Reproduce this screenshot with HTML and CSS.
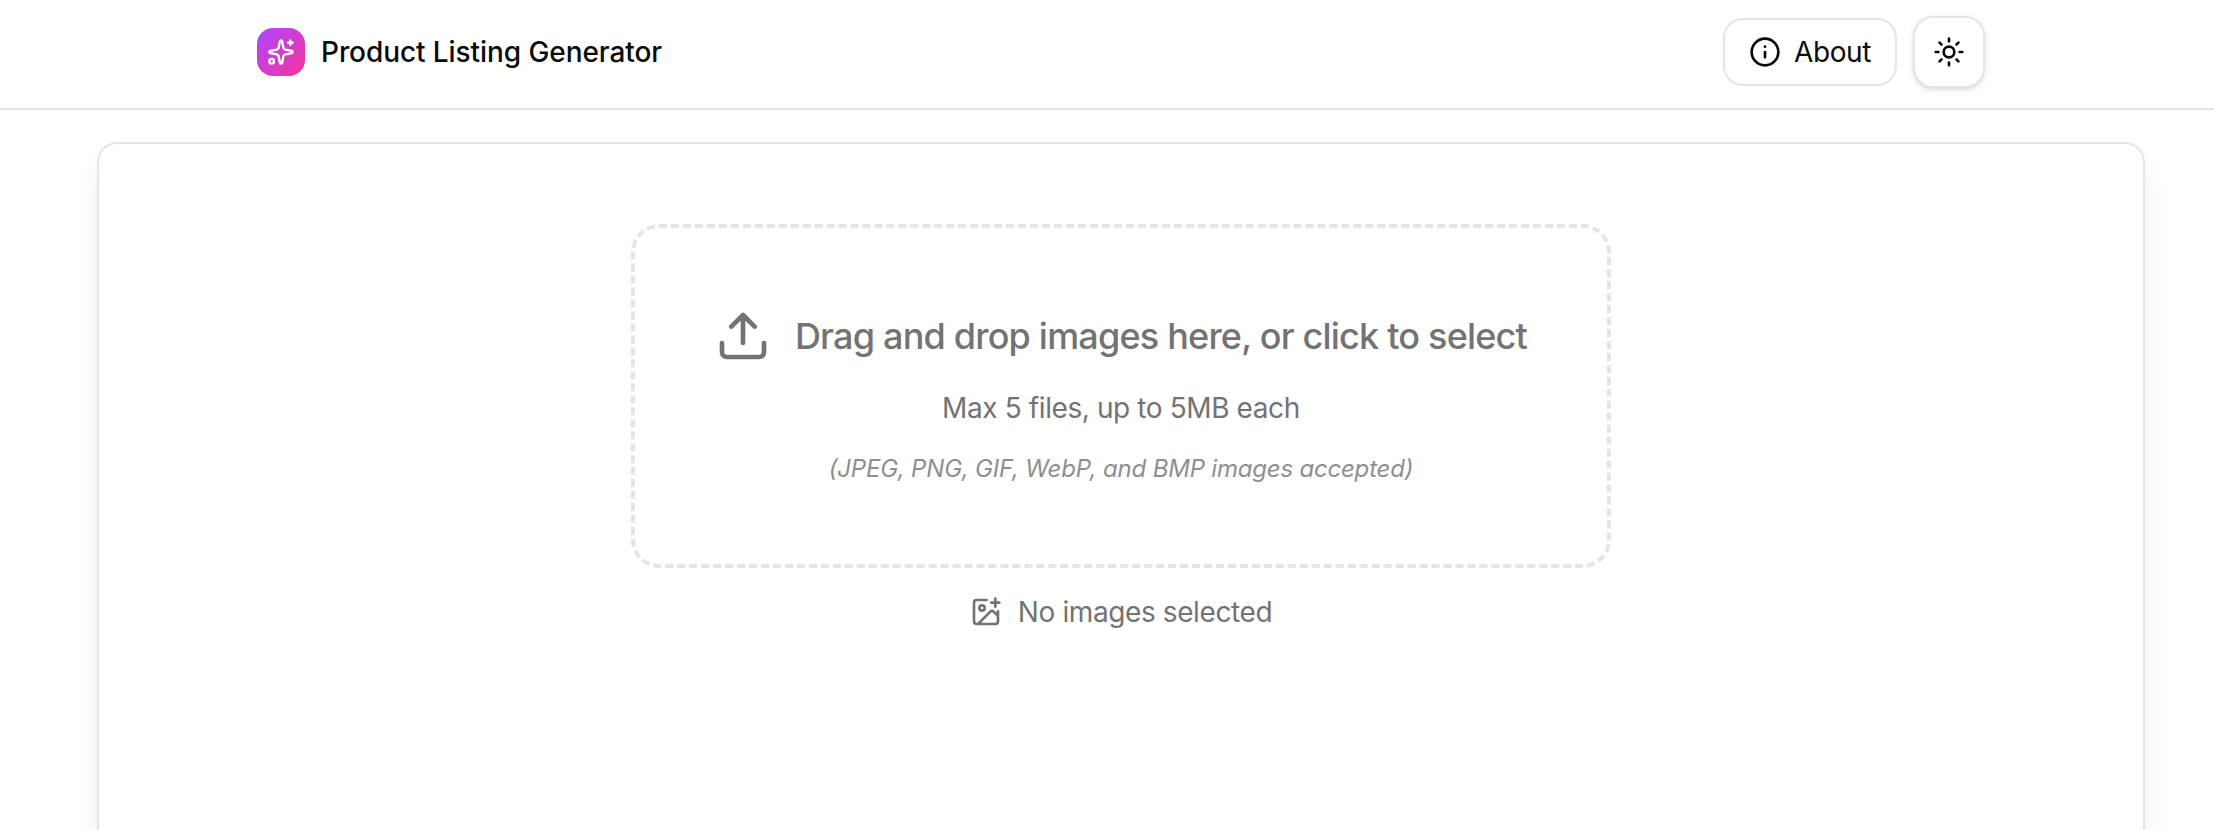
FILE: index.html
```html
<!DOCTYPE html>
<html lang="en">
<head>
<meta charset="utf-8">
<title>Product Listing Generator</title>
<link rel="stylesheet" href="styles.css">
</head>
<body>
<header class="header">
  <div class="brand">
    <span class="logo"><svg class="icon" width="28" height="28" viewBox="0 0 24 24"><path d="M11.017 2.814a1 1 0 0 1 1.966 0l1.051 5.558a2 2 0 0 0 1.594 1.594l5.558 1.051a1 1 0 0 1 0 1.966l-5.558 1.051a2 2 0 0 0-1.594 1.594l-1.051 5.558a1 1 0 0 1-1.966 0l-1.051-5.558a2 2 0 0 0-1.594-1.594l-5.558-1.051a1 1 0 0 1 0-1.966l5.558-1.051a2 2 0 0 0 1.594-1.594zM20 2v4M22 4h-4"/><circle cx="4" cy="20" r="2"/></svg></span>
    <span class="brand-name">Product Listing Generator</span>
  </div>
  <div class="actions">
    <button class="btn about"><svg class="icon" width="32" height="32" viewBox="0 0 24 24"><circle cx="12" cy="12" r="10"/><path d="M12 16v-4M12 8h.01"/></svg><span class="about-text">About</span></button>
    <button class="btn theme" aria-label="Toggle theme"><svg class="icon" width="32" height="32" viewBox="0 0 24 24"><circle cx="12" cy="12" r="4"/><path d="M12 2v2M12 20v2M4.93 4.93l1.41 1.41M17.66 17.66l1.41 1.41M2 12h2M20 12h2M6.34 17.66l-1.41 1.41M19.07 4.93l-1.41 1.41"/></svg></button>
  </div>
</header>
<main class="card">
  <div class="dropzone">
    <div class="prompt"><svg class="icon" width="56" height="56" viewBox="0 0 24 24"><path d="M12 3v12M17 8l-5-5-5 5M21 15v4a2 2 0 0 1-2 2H5a2 2 0 0 1-2-2v-4"/></svg><span class="prompt-text">Drag and drop images here, or click to select</span></div>
    <p class="limit">Max 5 files, up to 5MB each</p>
    <p class="formats">(JPEG, PNG, GIF, WebP, and BMP images accepted)</p>
  </div>
  <div class="status"><svg class="icon" width="32" height="32" viewBox="0 0 24 24"><path d="M16 5h6M19 2v6M21 11.5V19a2 2 0 0 1-2 2H5a2 2 0 0 1-2-2V5a2 2 0 0 1 2-2h7.5M21 15l-3.086-3.086a2 2 0 0 0-2.828 0L6 21"/><circle cx="9" cy="9" r="2"/></svg><span class="status-text">No images selected</span></div>
</main>
</body>
</html>
```
FILE: styles.css
```css
* { box-sizing: border-box; }
body {
  margin: 0;
  height: 830px;
  overflow: hidden;
  background: #fff;
  color: #0a0a0a;
  font-family: Inter, "Liberation Sans", sans-serif;
  font-size: 28px;
  line-height: 40px;
}
p { margin: 0; }
.icon {
  display: block;
  flex: none;
  fill: none;
  stroke: currentColor;
  stroke-width: 2;
  stroke-linecap: round;
  stroke-linejoin: round;
}
.header {
  display: flex;
  align-items: flex-start;
  justify-content: space-between;
  height: 110px;
  padding: 16px 229px 0 257px;
  border-bottom: 2px solid #e5e5e5;
}
.brand, .actions {
  display: flex;
  align-items: center;
  gap: 16px;
  height: 72px;
}
.logo {
  display: grid;
  place-items: center;
  width: 48px;
  height: 48px;
  border-radius: 16px;
  color: #fff;
  background: linear-gradient(135deg, #ad46ff, #f6339a);
}
.brand-name {
  font-weight: 500;
  letter-spacing: -0.08px;
  white-space: nowrap;
}
.btn {
  display: flex;
  align-items: center;
  justify-content: center;
  padding: 0;
  border: 2px solid #e5e5e5;
  border-radius: 20px;
  background: #fff;
  color: #0a0a0a;
  font: inherit;
}
.about { width: 174px; height: 68px; gap: 13px; }
.about-text { letter-spacing: -0.4px; }
.theme {
  width: 72px;
  height: 72px;
  box-shadow: 0 2px 6px rgba(0, 0, 0, .1), 0 2px 4px -2px rgba(0, 0, 0, .1);
}
.card {
  display: flex;
  flex-direction: column;
  align-items: center;
  width: 2048px;
  height: 688px;
  margin: 32px 0 0 97px;
  padding-top: 80px;
  border: 2px solid #e5e5e5;
  border-bottom: 0;
  border-radius: 20px 20px 0 0;
  box-shadow: 0 20px 30px -6px rgba(0, 0, 0, .1);
}
.dropzone {
  display: flex;
  flex-direction: column;
  align-items: center;
  width: 980px;
  height: 344px;
  padding-top: 80px;
  border: 4px dashed #e5e5e5;
  border-radius: 28px;
  color: #737373;
}
.prompt { display: flex; align-items: center; gap: 24px; height: 56px; }
.prompt-text {
  font-size: 36px;
  font-weight: 500;
  letter-spacing: -0.8px;
  white-space: nowrap;
}
.limit { margin-top: 24px; letter-spacing: -0.4px; }
.formats {
  margin-top: 21px;
  font-size: 24px;
  font-style: italic;
  letter-spacing: -0.2px;
  opacity: .8;
}
.status {
  display: flex;
  align-items: center;
  gap: 16px;
  margin-top: 24px;
  color: #737373;
}
.status-text { letter-spacing: -0.4px; }
```
